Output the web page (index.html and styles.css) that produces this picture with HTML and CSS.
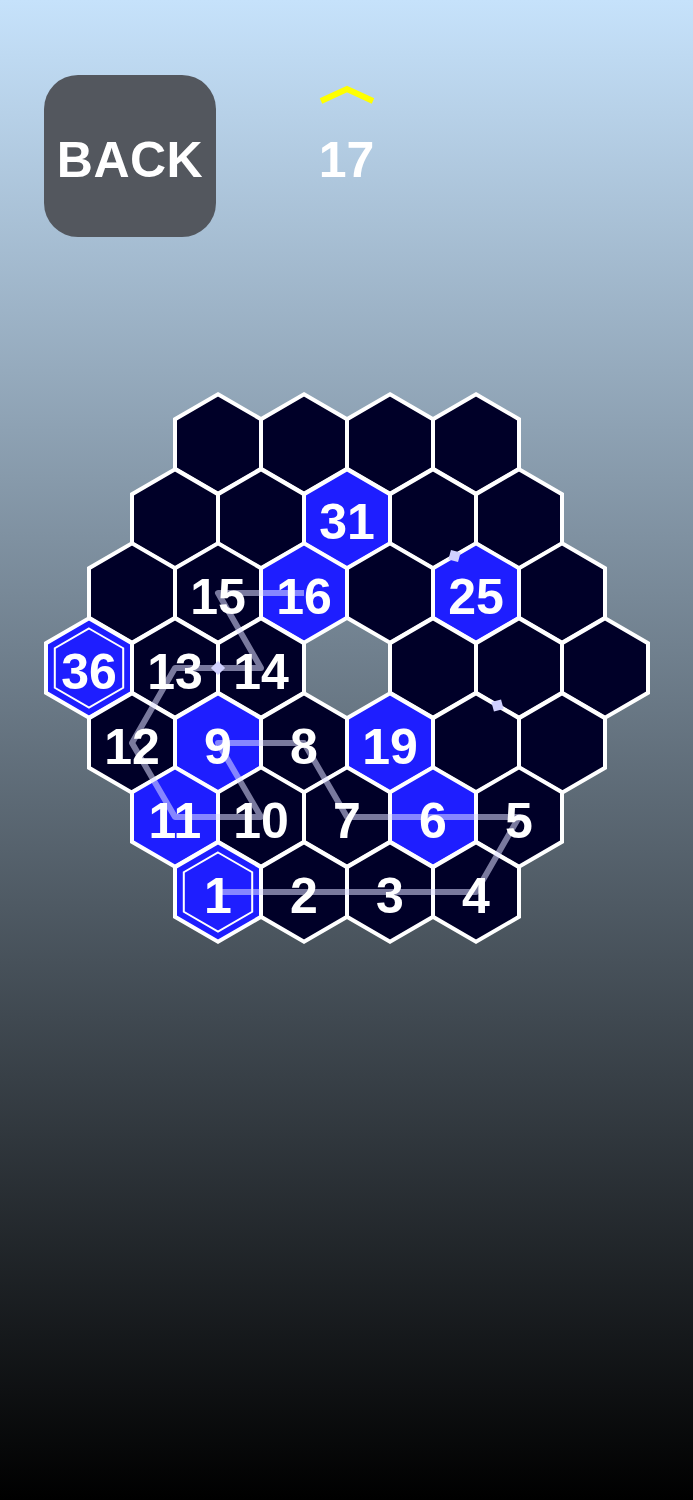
FILE: index.html
```html
<!DOCTYPE html>
<html>
<head>
  <meta charset="utf-8">
  <meta name="viewport" content="width=device-width">
  <title>Hex Path</title>
  <link rel="stylesheet" href="styles.css">
</head>
<body>
  <div class="screen">
    <header class="top-bar">
      <a class="back-button" href="#">BACK</a>
      <div class="level">
        <svg class="level-up" width="58" height="22" viewBox="0 0 58 22">
          <polyline points="3,17 29,5 55,17" />
        </svg>
        <span class="level-number">17</span>
      </div>
      <div></div>
    </header>

    <main class="board-wrap">
      <svg class="board" width="693" height="560" viewBox="0 390 693 560">
        <defs>
          <polygon id="hex" points="0,-49.7 43,-24.85 43,24.85 0,49.7 -43,24.85 -43,-24.85" />
          <polygon id="ring" points="0,-39.5 34.2,-19.75 34.2,19.75 0,39.5 -34.2,19.75 -34.2,-19.75" />
          <rect id="pin" x="-5" y="-5" width="10" height="10" />
        </defs>

        <!-- row 0 -->
        <use href="#hex" class="cell" x="218" y="444" />
        <use href="#hex" class="cell" x="304" y="444" />
        <use href="#hex" class="cell" x="390" y="444" />
        <use href="#hex" class="cell" x="476" y="444" />
        <!-- row 1 -->
        <use href="#hex" class="cell" x="175" y="519" />
        <use href="#hex" class="cell" x="261" y="519" />
        <use href="#hex" class="cell given" x="347" y="519" />
        <use href="#hex" class="cell" x="433" y="519" />
        <use href="#hex" class="cell" x="519" y="519" />
        <!-- row 2 -->
        <use href="#hex" class="cell" x="132" y="593" />
        <use href="#hex" class="cell" x="218" y="593" />
        <use href="#hex" class="cell given" x="304" y="593" />
        <use href="#hex" class="cell" x="390" y="593" />
        <use href="#hex" class="cell given" x="476" y="593" />
        <use href="#hex" class="cell" x="562" y="593" />
        <!-- row 3, the middle one is a hole -->
        <use href="#hex" class="cell given" x="89" y="668" />
        <use href="#hex" class="cell" x="175" y="668" />
        <use href="#hex" class="cell" x="261" y="668" />
        <use href="#hex" class="cell" x="433" y="668" />
        <use href="#hex" class="cell" x="519" y="668" />
        <use href="#hex" class="cell" x="605" y="668" />
        <!-- row 4 -->
        <use href="#hex" class="cell" x="132" y="743" />
        <use href="#hex" class="cell given" x="218" y="743" />
        <use href="#hex" class="cell" x="304" y="743" />
        <use href="#hex" class="cell given" x="390" y="743" />
        <use href="#hex" class="cell" x="476" y="743" />
        <use href="#hex" class="cell" x="562" y="743" />
        <!-- row 5 -->
        <use href="#hex" class="cell given" x="175" y="817" />
        <use href="#hex" class="cell" x="261" y="817" />
        <use href="#hex" class="cell" x="347" y="817" />
        <use href="#hex" class="cell given" x="433" y="817" />
        <use href="#hex" class="cell" x="519" y="817" />
        <!-- row 6 -->
        <use href="#hex" class="cell given" x="218" y="892" />
        <use href="#hex" class="cell" x="304" y="892" />
        <use href="#hex" class="cell" x="390" y="892" />
        <use href="#hex" class="cell" x="476" y="892" />

        <!-- first and last number -->
        <use href="#ring" class="ring" x="89" y="668" />
        <use href="#ring" class="ring" x="218" y="892" />

        <!-- path drawn so far -->
        <polyline class="trail" points="218,892 304,892 390,892 476,892 519,817 433,817 347,817 304,743 218,743 261,817 175,817 132,743 175,668 261,668 218,593 304,593" />

        <g class="nums">
          <text x="347" y="539">31</text>
          <text x="218" y="614">15</text>
          <text x="304" y="614">16</text>
          <text x="476" y="614">25</text>
          <text x="89" y="689">36</text>
          <text x="175" y="689">13</text>
          <text x="261" y="689">14</text>
          <text x="132" y="764">12</text>
          <text x="218" y="764">9</text>
          <text x="304" y="764">8</text>
          <text x="390" y="764">19</text>
          <text x="175" y="838">11</text>
          <text x="261" y="838">10</text>
          <text x="347" y="838">7</text>
          <text x="433" y="838">6</text>
          <text x="519" y="838">5</text>
          <text x="218" y="913">1</text>
          <text x="304" y="913">2</text>
          <text x="390" y="913">3</text>
          <text x="476" y="913">4</text>
        </g>

        <!-- wall pins on shared edges -->
        <use href="#pin" class="pin" transform="translate(218 668) rotate(45)" />
        <use href="#pin" class="pin" transform="translate(454.5 556) rotate(15)" />
        <use href="#pin" class="pin" transform="translate(497.5 705.5) rotate(-15)" />
      </svg>
    </main>
  </div>
</body>
</html>
```

FILE: styles.css
```css
html, body {
  margin: 0;
  padding: 0;
}

body {
  min-height: 1500px;
  background: linear-gradient(to bottom, #c6e2fb 0%, #000 100%);
  font-family: "Liberation Sans", Arial, sans-serif;
  color: white;
}

.screen {
  width: 693px;
  height: 1500px;
}

.top-bar {
  display: grid;
  grid-template-columns: 1fr auto 1fr;
  align-items: start;
  padding-top: 75px;
}

.back-button {
  justify-self: start;
  display: flex;
  align-items: center;
  justify-content: center;
  box-sizing: border-box;
  width: 172px;
  height: 162px;
  margin-left: 44px;
  padding-top: 7px;
  border-radius: 34px;
  background-color: #53575e;
  color: white;
  font-size: 50px;
  font-weight: bold;
  line-height: 50px;
  letter-spacing: 0.5px;
  text-decoration: none;
}

.level {
  display: flex;
  flex-direction: column;
  align-items: center;
  padding-top: 9px;
}

.level-up {
  display: block;
}

.level-up polyline {
  fill: none;
  stroke: #ffff00;
  stroke-width: 6;
}

.level-number {
  display: block;
  margin-top: 30px;
  font-size: 50px;
  font-weight: bold;
  line-height: 48px;
}

.board-wrap {
  margin-top: 153px;
}

.board {
  display: block;
}

.cell {
  fill: #000028;
  stroke: white;
  stroke-width: 4;
  stroke-linejoin: miter;
}

.cell.given {
  fill: #1e1eff;
}

.ring {
  fill: none;
  stroke: white;
  stroke-width: 2;
}

.trail {
  fill: none;
  stroke: rgba(220, 220, 255, 0.55);
  stroke-width: 6;
  stroke-linejoin: round;
}

.nums text {
  fill: white;
  font-family: "Liberation Sans", Arial, sans-serif;
  font-size: 50px;
  font-weight: bold;
  text-anchor: middle;
}

.pin {
  fill: #d0d0ff;
}
```
